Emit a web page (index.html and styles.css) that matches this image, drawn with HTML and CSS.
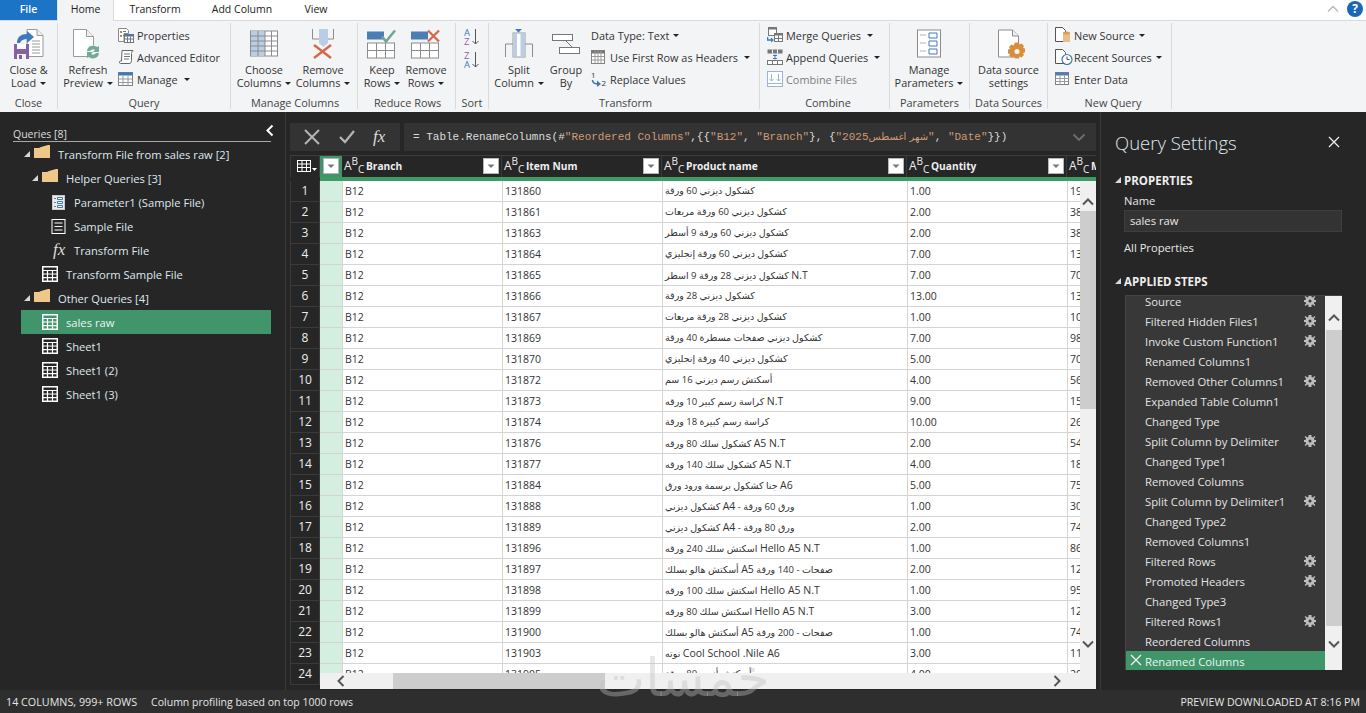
FILE: index.html
```html
<!DOCTYPE html>
<html lang="en">
<head>
<meta charset="utf-8">
<title>Power Query Editor</title>
<link rel="stylesheet" href="styles.css">
</head>
<body>
<svg class="defs" width="0" height="0">
  <defs>
    <symbol id="t-white" viewBox="0 0 16 16"><rect x=".75" y=".75" width="14.5" height="14.5" fill="none" stroke="#fff" stroke-width="1.5"/><path d="M0 4.500h16M0 8h16M0 11.700h16M5.500 4v12M10.500 4v12" stroke="#fff" stroke-width="1.200"/></symbol>
    <symbol id="folder" viewBox="0 0 16 14"><path d="M0 3h5l2-1 7-2h2v13H0z" fill="#eec78a"/></symbol>
    <symbol id="tri" viewBox="0 0 6 6"><path d="M6 0v6H0z" fill="#d8d8d8"/></symbol>
    <symbol id="gear" viewBox="0 0 12 12"><path d="M4.500 0h3v2l1.400.6L10.400 1l1 1-1.500 1.500.6 1.500H12v2h-1.500l-.6 1.500 1.500 1.500-1 1-1.500-1.500-1.400.6V12h-3v-2l-1.400-.6L1.600 11l-1-1 1.500-1.500L1.500 7H0V5h1.500l.6-1.500L.6 2l1-1 1.500 1.600L4.500 2z" fill="#bdbdbd"/><circle cx="6" cy="6" r="1.500" fill="#383838"/></symbol>
    <symbol id="down" viewBox="0 0 16 16"><rect width="16" height="16" fill="#fff"/><rect x=".5" y=".5" width="15" height="15" fill="none" stroke="#b5b5b5"/><path d="M4.500 6.500h7L8 10z" fill="#777"/></symbol>
  </defs>
</svg>

<header class="tabs">
  <div class="tab tab-file">File</div>
  <div class="tab tab-on">Home</div>
  <div class="tab tab-transform">Transform</div>
  <div class="tab tab-add">Add Column</div>
  <div class="tab tab-view">View</div>
  <div class="tabs-end">
    <svg width="12" height="8" viewBox="0 0 12 8"><path d="M1 6.500l5-5 5 5" fill="none" stroke="#b8b8b8" stroke-width="1.300"/></svg>
    <div class="help">?</div>
  </div>
</header>

<section class="ribbon">
  <div class="group g-close">
    <div class="gbody">
      <div class="big">
        <svg class="bigicon" width="30" height="32" viewBox="0 0 30 32"><path d="M13 1.500h10l6 6v21H13z" fill="#fff" stroke="#9a9a9a"/><path d="M23 1.500v6h6" fill="#eee" stroke="#9a9a9a"/><path d="M18 13h8M18 16h8M18 19h8M18 22h8M18 25h8" stroke="#9a9a9a"/><path d="M3 15c0-6 4-9 10-9V3l7 6-7 6v-4c-3 0-6 1-7 4z" fill="#3f79bd"/><path d="M0 16h15v15H0z" fill="#8661a8"/><path d="M3 16h9v5H3z" fill="#fff"/><path d="M3 26h9v5H3z" fill="#f3f4f6"/><path d="M5 27h3v4H5z" fill="#8661a8"/></svg>
        <span class="lbl">Close &amp;</span>
        <span class="lbl">Load <i class="caret"></i></span>
      </div>
    </div>
    <div class="gname">Close</div>
  </div>

  <div class="group g-query">
    <div class="gbody">
      <div class="big b-refresh">
        <svg class="bigicon" width="30" height="30" viewBox="0 0 30 30"><path d="M.5.500h13l7 7v20H.5z" fill="#fff" stroke="#9a9a9a"/><path d="M13.500.500v7h7" fill="#eee" stroke="#9a9a9a"/><circle cx="20" cy="23" r="7" fill="#f3f4f6"/><path d="M14 22a6 6 0 0 1 10-4l2-1v6h-6l2-2a3.500 3.500 0 0 0-5 1zM26 24a6 6 0 0 1-10 4l-2 1v-6h6l-2 2a3.500 3.500 0 0 0 5-1z" fill="#75a995"/></svg>
        <span class="lbl">Refresh</span>
        <span class="lbl">Preview <i class="caret"></i></span>
      </div>
      <div class="smalls">
        <div class="small"><svg width="16" height="16" viewBox="0 0 16 16"><path d="M.5 1.500h8l2 2v3H6v8H.5z" fill="#fff" stroke="#8a8a8a"/><path d="M2 4h2v2H2zM2 8h2v2H2z" fill="#b18a52"/><path d="M5 4.500h3M5 8.500h1" stroke="#777"/><rect x="6.500" y="7.500" width="9" height="8" fill="#fff" stroke="#777"/><path d="M6.500 7.500h9v2h-9z" fill="#3f79bd"/><path d="M6.500 12h9M9.500 9.500v6M12.500 9.500v6" stroke="#777"/></svg><span>Properties</span></div>
        <div class="small"><svg width="16" height="16" viewBox="0 0 16 16"><path d="M4 1.500h11c-1 1-1.500 2-1.500 3v7c0 2-1 3-2.500 3H2.500C1 14.500 1 12 2.500 12h1z" fill="#fff" stroke="#666"/><path d="M6 5h6M6 7.500h6M6 10h5" stroke="#777"/></svg><span>Advanced Editor</span></div>
        <div class="small"><svg width="16" height="14" viewBox="0 0 16 14"><rect x=".5" y=".5" width="14" height="13" fill="#fff" stroke="#808080"/><path d="M.5.500h14v3H.5z" fill="#3f79bd"/><path d="M.5 7h14M.5 10.500h14M5 3.500v10M10 3.500v10" stroke="#999"/></svg><span>Manage</span><i class="caret caret-wide"></i></div>
      </div>
    </div>
    <div class="gname">Query</div>
  </div>

  <div class="group g-cols">
    <div class="gbody">
      <div class="big b-cols">
        <svg class="bigicon" width="29" height="27" viewBox="0 0 29 27"><rect x=".5" y=".5" width="27" height="25" fill="#fff" stroke="#8c8c8c"/><rect x="1" y="1" width="14" height="24" fill="#b9cde4"/><path d="M.5 5.500h27M.5 10.500h27M.5 15.500h27M.5 20.500h27M8 .5v25M15 .5v25M21.500.500v25" stroke="#8c8c8c"/></svg>
        <span class="lbl">Choose</span>
        <span class="lbl">Columns <i class="caret"></i></span>
      </div>
      <div class="big b-cols2">
        <svg class="bigicon" width="24" height="30" viewBox="0 0 24 30"><path d="M1.500 0v10h21V0" fill="none" stroke="#8c8c8c"/><path d="M8 0h9v14l-4.500 4L8 14z" fill="#b9cde4"/><path d="M3 16l17 13M20 16L3 29" stroke="#d2694a" stroke-width="2.400"/></svg>
        <span class="lbl">Remove</span>
        <span class="lbl">Columns <i class="caret"></i></span>
      </div>
    </div>
    <div class="gname">Manage Columns</div>
  </div>

  <div class="group g-rows">
    <div class="gbody">
      <div class="big b-keep">
        <svg class="bigicon" width="30" height="29" viewBox="0 0 30 29"><path d="M0 2h17v8H0z" fill="#4a7eb5"/><path d="M15 7l4 5 9-11" fill="none" stroke="#6fa88f" stroke-width="2.600"/><rect x=".5" y="13.500" width="27" height="15" fill="#fff" stroke="#8c8c8c"/><path d="M.5 21h27M9.500 13.500v15M18.500 13.500v15" stroke="#8c8c8c"/></svg>
        <span class="lbl">Keep</span>
        <span class="lbl">Rows <i class="caret"></i></span>
      </div>
      <div class="big b-rem">
        <svg class="bigicon" width="30" height="29" viewBox="0 0 30 29"><path d="M0 2h17v8H0z" fill="#4a7eb5"/><path d="M17 1l11 11M28 1L17 12" stroke="#d2694a" stroke-width="2.200"/><rect x=".5" y="13.500" width="27" height="15" fill="#fff" stroke="#8c8c8c"/><path d="M.5 21h27M9.500 13.500v15M18.500 13.500v15" stroke="#8c8c8c"/></svg>
        <span class="lbl">Remove</span>
        <span class="lbl">Rows <i class="caret"></i></span>
      </div>
    </div>
    <div class="gname">Reduce Rows</div>
  </div>

  <div class="group g-sort">
    <div class="gbody sortbody">
      <svg width="16" height="18" viewBox="0 0 16 18"><text x="0" y="8" class="st st-a">A</text><text x="0" y="17" class="st st-z">Z</text><path d="M11.500 1v15M8.500 13l3 3 3-3" fill="none" stroke="#555"/></svg>
      <svg width="16" height="18" viewBox="0 0 16 18"><text x="0" y="8" class="st st-z">Z</text><text x="0" y="17" class="st st-a">A</text><path d="M11.500 1v15M8.500 13l3 3 3-3" fill="none" stroke="#555"/></svg>
    </div>
    <div class="gname">Sort</div>
  </div>

  <div class="group g-trans">
    <div class="gbody">
      <div class="big b-split">
        <svg class="bigicon" width="29" height="30" viewBox="0 0 29 30"><path d="M.5 28V15h27v13" fill="none" stroke="#8c8c8c"/><rect x="8" y="4" width="12" height="24" fill="#fff" stroke="#9a9a9a"/><path d="M8.500 4h3.500v24H8.500zM15.500 4H19.500v24h-4z" fill="#b9cde4"/><path d="M10 0h7l-3.500 3.500z" fill="#3f79bd"/></svg>
        <span class="lbl">Split</span>
        <span class="lbl">Column <i class="caret"></i></span>
      </div>
      <div class="big b-group">
        <svg class="bigicon" width="29" height="30" viewBox="0 0 29 30"><rect x=".5" y="5.500" width="20" height="6" fill="#fff" stroke="#777"/><rect x="7.500" y="18.500" width="20" height="6" fill="#fff" stroke="#777"/><path d="M14 12l6 6" stroke="#777"/></svg>
        <span class="lbl">Group</span>
        <span class="lbl">By</span>
      </div>
      <div class="smalls s-trans">
        <div class="small"><span>Data Type: Text</span><i class="caret"></i></div>
        <div class="small s-use"><svg width="14" height="14" viewBox="0 0 14 14"><rect x=".5" y=".5" width="13" height="13" fill="#fff" stroke="#808080"/><path d="M.5.500h13v3H.5z" fill="#777"/><path d="M.5 6.500h13M.5 10h13M4 .5v13M7 .5v13M10 .5v13" stroke="#999"/></svg><span>Use First Row as Headers</span><i class="caret caret-wide"></i></div>
        <div class="small"><svg width="16" height="16" viewBox="0 0 16 16"><text x="0" y="6.500" class="rt">1</text><text x="10.500" y="15" class="rt">2</text><path d="M1.500 9c0 3 2 4 6 4" fill="none" stroke="#3f79bd" stroke-width="1.600"/><path d="M6 9.500l4 3.500-4 3z" fill="#3f79bd"/></svg><span>Replace Values</span></div>
      </div>
    </div>
    <div class="gname">Transform</div>
  </div>

  <div class="group g-comb">
    <div class="gbody">
      <div class="smalls">
        <div class="small"><svg width="16" height="16" viewBox="0 0 16 16"><rect x="1.500" y=".5" width="8" height="8" fill="#fff" stroke="#777"/><path d="M1.500.500h8v2h-8z" fill="#777"/><rect x="7.500" y="6.500" width="8" height="8" fill="#fff" stroke="#777"/><path d="M7.500 6.500h8v2h-8z" fill="#777"/><path d="M7.500 11.500h8M11.500 8v7" stroke="#777"/><path d="M.5 10v3h4" fill="none" stroke="#3f79bd" stroke-width="1.500"/><path d="M4 10.500l3 2.500-3 2.500z" fill="#3f79bd"/></svg><span>Merge Queries</span><i class="caret caret-wide"></i></div>
        <div class="small"><svg width="16" height="16" viewBox="0 0 16 16"><rect x=".5" y=".5" width="15" height="4" fill="#777"/><path d="M5.500.500v4M10.500.500v4" stroke="#fff"/><rect x=".5" y="11.500" width="15" height="4" fill="#fff" stroke="#777"/><path d="M5.500 11.500v4M10.500 11.500v4" stroke="#777"/><path d="M8 5.500v5M6 6.500h4M6 9.500h4" stroke="#3f79bd"/></svg><span>Append Queries</span><i class="caret caret-wide"></i></div>
        <div class="small s-off"><svg width="16" height="16" viewBox="0 0 16 16"><rect x=".5" y=".5" width="15" height="15" fill="#fff" stroke="#9db5d5"/><path d="M4.500 3v7M2.500 8l2 2 2-2M11.500 3v7M9.500 8l2 2 2-2M1 12.500h14" fill="none" stroke="#9db5d5"/></svg><span>Combine Files</span></div>
      </div>
    </div>
    <div class="gname">Combine</div>
  </div>

  <div class="group g-par">
    <div class="gbody">
      <div class="big b-par">
        <svg class="bigicon" width="24" height="29" viewBox="0 0 24 29"><rect x=".5" y=".5" width="23" height="27" fill="#fff" stroke="#8c8c8c"/><path d="M3 5.500h6M3 13.500h6M3 21.500h6" stroke="#b5b5b5"/><path d="M12 3.500h8v5h-8zM12 11.500h8v5h-8zM12 19.500h8v5h-8z" fill="#fff" stroke="#3f79bd"/></svg>
        <span class="lbl">Manage</span>
        <span class="lbl">Parameters <i class="caret"></i></span>
      </div>
    </div>
    <div class="gname">Parameters</div>
  </div>

  <div class="group g-data">
    <div class="gbody">
      <div class="big b-par">
        <svg class="bigicon b-shift" width="28" height="29" viewBox="0 0 28 29"><path d="M.5.500h14l6 6v21H.5z" fill="#fff" stroke="#8c8c8c"/><path d="M14.500.500v6h6" fill="#eee" stroke="#8c8c8c"/><path d="M17 13h4l.5 2 2-1 2.500 2.500-1 2 2 .5v4l-2 .5 1 2-2.500 2.500-2-1-.5 2h-4l-.5-2-2 1L11 26.500l1-2-2-.5v-4l2-.5-1-2 2.500-2.500 2 1z" fill="#d88f3c"/><circle cx="19" cy="22" r="2.500" fill="#f3f4f6"/></svg>
        <span class="lbl">Data source</span>
        <span class="lbl">settings</span>
      </div>
    </div>
    <div class="gname">Data Sources</div>
  </div>

  <div class="group g-new">
    <div class="gbody">
      <div class="smalls">
        <div class="small"><svg width="16" height="16" viewBox="0 0 16 16"><path d="M.5.500h7l3 3v11H.5z" fill="#fff" stroke="#555"/><path d="M8 6h7v9H8z" fill="#e8bf86"/><ellipse cx="11.500" cy="6" rx="3.500" ry="1.500" fill="#d99f54"/></svg><span>New Source</span><i class="caret"></i></div>
        <div class="small"><svg width="18" height="16" viewBox="0 0 18 16"><path d="M.5.500h7l3 3v11H.5z" fill="#fff" stroke="#555"/><circle cx="12" cy="10.500" r="5" fill="#fff" stroke="#3f79bd" stroke-width="1.200"/><path d="M12 7.500v3h2.500" fill="none" stroke="#555"/></svg><span class="tight">Recent Sources</span><i class="caret"></i></div>
        <div class="small"><svg width="16" height="14" viewBox="0 0 16 14"><rect x=".5" y=".5" width="13" height="12" fill="#fff" stroke="#808080"/><path d="M.5.500h13v3H.5z" fill="#4a7eb5"/><path d="M.5 6.500h13M.5 9.500h13M5 3.500v9M9.500 3.500v9" stroke="#999"/></svg><span>Enter Data</span></div>
      </div>
    </div>
    <div class="gname">New Query</div>
  </div>
</section>

<main class="main">
  <aside class="left">
    <div class="qhead"><span>Queries [8]</span>
      <svg class="collapse" width="9" height="13" viewBox="0 0 9 13"><path d="M7.500 1.500l-5 5 5 5" fill="none" stroke="#fff" stroke-width="2"/></svg>
    </div>
    <ul class="tree">
      <li class="node l0"><svg class="tw" width="6" height="6"><use href="#tri"/></svg><svg class="fi" width="16" height="14"><use href="#folder"/></svg><span>Transform File from sales raw [2]</span></li>
      <li class="node l1"><svg class="tw" width="6" height="6"><use href="#tri"/></svg><svg class="fi" width="16" height="14"><use href="#folder"/></svg><span>Helper Queries [3]</span></li>
      <li class="node l2"><svg class="ni" width="13" height="15" viewBox="0 0 13 15"><rect x=".5" y=".5" width="12" height="14" fill="#e9edf3" stroke="#c9c9c9"/><path d="M2 3.500h2M2 7.500h2M2 11.500h2" stroke="#777"/><path d="M5.500 2.500h5v2h-5zM5.500 6.500h5v2h-5zM5.500 10.500h5v2h-5z" fill="#fff" stroke="#3f79bd"/></svg><span>Parameter1 (Sample File)</span></li>
      <li class="node l2"><svg class="ni" width="14" height="15" viewBox="0 0 14 15"><rect x=".5" y=".5" width="13" height="14" fill="none" stroke="#fff"/><path d="M3 4h8M3 7.500h8M3 11h8" stroke="#fff"/></svg><span>Sample File</span></li>
      <li class="node l2"><span class="fx fx-tree">fx</span><span>Transform File</span></li>
      <li class="node l1x"><svg class="ti" width="16" height="16"><use href="#t-white"/></svg><span>Transform Sample File</span></li>
      <li class="node l0"><svg class="tw" width="6" height="6"><use href="#tri"/></svg><svg class="fi" width="16" height="14"><use href="#folder"/></svg><span>Other Queries [4]</span></li>
      <li class="node l1x sel"><svg class="ti" width="16" height="16"><use href="#t-white"/></svg><span>sales raw</span></li>
      <li class="node l1x"><svg class="ti" width="16" height="16"><use href="#t-white"/></svg><span>Sheet1</span></li>
      <li class="node l1x"><svg class="ti" width="16" height="16"><use href="#t-white"/></svg><span>Sheet1 (2)</span></li>
      <li class="node l1x"><svg class="ti" width="16" height="16"><use href="#t-white"/></svg><span>Sheet1 (3)</span></li>
    </ul>
  </aside>

  <section class="center">
    <div class="fbar">
      <div class="fbtns">
        <svg width="16" height="16" viewBox="0 0 16 16"><path d="M1 1l14 14M15 1L1 15" stroke="#b5b5b5" stroke-width="2"/></svg>
        <svg width="16" height="14" viewBox="0 0 16 14"><path d="M1 7l5 5 9-11" fill="none" stroke="#b5b5b5" stroke-width="2.200"/></svg>
        <span class="fx">fx</span>
      </div>
      <div class="fbox">
        <code class="formula">= Table.RenameColumns(#<b>"Reordered Columns"</b>,{{<b>"B12"</b>, <b>"Branch"</b>}, {<b>"2025</b><b class="farab">شهر اغسطس</b><b>"</b>, <b>"Date"</b>}})</code>
        <svg class="fchev" width="14" height="9" viewBox="0 0 14 9"><path d="M1.500 1.500L7 7l5.500-5.500" fill="none" stroke="#6f6f6f" stroke-width="1.800"/></svg>
      </div>
    </div>

    <div class="grid">
      <div class="hrow">
        <div class="hcorner"><svg width="20" height="13" viewBox="0 0 20 13"><rect x=".5" y=".5" width="13" height="11" fill="#252525" stroke="#fff"/><path d="M.5 4h13M.5 7.500h13M5 .5v11M9.500.500v11" stroke="#fff"/><path d="M15 8h5l-2.500 3z" fill="#fff"/></svg></div>
        <div class="hsel"><svg width="16" height="16"><use href="#down"/></svg></div>
        <div class="hc"><span class="abc">A<sup>B</sup><sub>C</sub></span><span class="hname">Branch</span><svg class="hf" width="16" height="16"><use href="#down"/></svg></div>
        <div class="hc"><span class="abc">A<sup>B</sup><sub>C</sub></span><span class="hname">Item Num</span><svg class="hf" width="16" height="16"><use href="#down"/></svg></div>
        <div class="hc"><span class="abc">A<sup>B</sup><sub>C</sub></span><span class="hname">Product name</span><svg class="hf" width="16" height="16"><use href="#down"/></svg></div>
        <div class="hc"><span class="abc">A<sup>B</sup><sub>C</sub></span><span class="hname">Quantity</span><svg class="hf" width="16" height="16"><use href="#down"/></svg></div>
        <div class="hc"><span class="abc">A<sup>B</sup><sub>C</sub></span><span class="hname">Month</span></div>
      </div>
      <div class="gstrip"></div>
      <div class="rows">
        <div class="row"><div class="n">1</div><div class="s"></div><div class="c">B12</div><div class="c">131860</div><div class="c ar">كشكول ديزني 60 ورقة</div><div class="c">1.00</div><div class="c">19.50</div></div>
        <div class="row"><div class="n">2</div><div class="s"></div><div class="c">B12</div><div class="c">131861</div><div class="c ar">كشكول ديزني 60 ورقة مربعات</div><div class="c">2.00</div><div class="c">38.00</div></div>
        <div class="row"><div class="n">3</div><div class="s"></div><div class="c">B12</div><div class="c">131863</div><div class="c ar">كشكول ديزني 60 ورقة 9 أسطر</div><div class="c">2.00</div><div class="c">38.00</div></div>
        <div class="row"><div class="n">4</div><div class="s"></div><div class="c">B12</div><div class="c">131864</div><div class="c ar">كشكول ديزني 60 ورقة إنجليزي</div><div class="c">7.00</div><div class="c">13.00</div></div>
        <div class="row"><div class="n">5</div><div class="s"></div><div class="c">B12</div><div class="c">131865</div><div class="c ar"><span class="la">N.T</span> كشكول ديزني 28 ورقة 9 اسطر</div><div class="c">7.00</div><div class="c">70.00</div></div>
        <div class="row"><div class="n">6</div><div class="s"></div><div class="c">B12</div><div class="c">131866</div><div class="c ar">كشكول ديزني 28 ورقة</div><div class="c">13.00</div><div class="c">13.00</div></div>
        <div class="row"><div class="n">7</div><div class="s"></div><div class="c">B12</div><div class="c">131867</div><div class="c ar">كشكول ديزني 28 ورقة مربعات</div><div class="c">1.00</div><div class="c">10.00</div></div>
        <div class="row"><div class="n">8</div><div class="s"></div><div class="c">B12</div><div class="c">131869</div><div class="c ar">كشكول ديزني صفحات مسطرة 40 ورقة</div><div class="c">7.00</div><div class="c">98.00</div></div>
        <div class="row"><div class="n">9</div><div class="s"></div><div class="c">B12</div><div class="c">131870</div><div class="c ar">كشكول ديزني 40 ورقة إنجليزي</div><div class="c">5.00</div><div class="c">70.00</div></div>
        <div class="row"><div class="n">10</div><div class="s"></div><div class="c">B12</div><div class="c">131872</div><div class="c ar">أسكتش رسم ديزني 16 سم</div><div class="c">4.00</div><div class="c">56.00</div></div>
        <div class="row"><div class="n">11</div><div class="s"></div><div class="c">B12</div><div class="c">131873</div><div class="c ar"><span class="la">N.T</span> كراسة رسم كبير 10 ورقه</div><div class="c">9.00</div><div class="c">15.00</div></div>
        <div class="row"><div class="n">12</div><div class="s"></div><div class="c">B12</div><div class="c">131874</div><div class="c ar">كراسة رسم كبيرة 18 ورقة</div><div class="c">10.00</div><div class="c">26.00</div></div>
        <div class="row"><div class="n">13</div><div class="s"></div><div class="c">B12</div><div class="c">131876</div><div class="c ar"><span class="la">A5 N.T</span> كشكول سلك 80 ورقه</div><div class="c">2.00</div><div class="c">54.00</div></div>
        <div class="row"><div class="n">14</div><div class="s"></div><div class="c">B12</div><div class="c">131877</div><div class="c ar"><span class="la">A5 N.T</span> كشكول سلك 140 ورقه</div><div class="c">4.00</div><div class="c">18.00</div></div>
        <div class="row"><div class="n">15</div><div class="s"></div><div class="c">B12</div><div class="c">131884</div><div class="c ar"><span class="la">A6</span> جنا كشكول برسمة ورود ورق</div><div class="c">5.00</div><div class="c">75.00</div></div>
        <div class="row"><div class="n">16</div><div class="s"></div><div class="c">B12</div><div class="c">131888</div><div class="c ar">ورق 60 ورقة - <span class="la">A4</span> كشكول ديزني</div><div class="c">1.00</div><div class="c">30.00</div></div>
        <div class="row"><div class="n">17</div><div class="s"></div><div class="c">B12</div><div class="c">131889</div><div class="c ar">ورق 80 ورقة - <span class="la">A4</span> كشكول ديزني</div><div class="c">2.00</div><div class="c">74.00</div></div>
        <div class="row"><div class="n">18</div><div class="s"></div><div class="c">B12</div><div class="c">131896</div><div class="c ar"><span class="la">Hello A5 N.T</span> اسكتش سلك 240 ورقه</div><div class="c">1.00</div><div class="c">86.00</div></div>
        <div class="row"><div class="n">19</div><div class="s"></div><div class="c">B12</div><div class="c">131897</div><div class="c ar">صفحات - 140 ورقة <span class="la">A5</span> أسكتش هالو بسلك</div><div class="c">2.00</div><div class="c">12.00</div></div>
        <div class="row"><div class="n">20</div><div class="s"></div><div class="c">B12</div><div class="c">131898</div><div class="c ar"><span class="la">Hello A5 N.T</span> اسكتش سلك 100 ورقه</div><div class="c">1.00</div><div class="c">95.00</div></div>
        <div class="row"><div class="n">21</div><div class="s"></div><div class="c">B12</div><div class="c">131899</div><div class="c ar"><span class="la">Hello A5 N.T</span> اسكتش سلك 80 ورقه</div><div class="c">3.00</div><div class="c">12.00</div></div>
        <div class="row"><div class="n">22</div><div class="s"></div><div class="c">B12</div><div class="c">131900</div><div class="c ar">صفحات - 200 ورقة <span class="la">A5</span> أسكتش هالو بسلك</div><div class="c">1.00</div><div class="c">74.00</div></div>
        <div class="row"><div class="n">23</div><div class="s"></div><div class="c">B12</div><div class="c">131903</div><div class="c ar"><span class="la">Cool School .Nile A6</span> نوته</div><div class="c">3.00</div><div class="c">11.00</div></div>
        <div class="row"><div class="n">24</div><div class="s"></div><div class="c">B12</div><div class="c">131905</div><div class="c ar">أسكتش أنمي 80 ورقة</div><div class="c">4.00</div><div class="c">20.00</div></div>
      </div>
      <div class="vbar">
        <svg class="va" width="12" height="8" viewBox="0 0 12 8"><path d="M1 6.500l5-5 5 5" fill="none" stroke="#555" stroke-width="2"/></svg>
        <div class="vthumb"></div>
        <svg class="vb" width="12" height="8" viewBox="0 0 12 8"><path d="M1 1.500l5 5 5-5" fill="none" stroke="#555" stroke-width="2"/></svg>
      </div>
      <div class="hbar">
        <svg class="ha" width="8" height="12" viewBox="0 0 8 12"><path d="M6.500 1l-5 5 5 5" fill="none" stroke="#555" stroke-width="2"/></svg>
        <div class="hthumb"></div>
        <svg class="hb" width="8" height="12" viewBox="0 0 8 12"><path d="M1.500 1l5 5-5 5" fill="none" stroke="#555" stroke-width="2"/></svg>
      </div>
    </div>
  </section>

  <aside class="right">
    <div class="qs-head"><span class="qs-title">Query Settings</span>
      <svg width="12" height="12" viewBox="0 0 12 12"><path d="M1 1l10 10M11 1L1 11" stroke="#eee" stroke-width="1.300"/></svg>
    </div>
    <div class="sect"><svg width="6" height="6"><use href="#tri"/></svg><span>PROPERTIES</span></div>
    <div class="plabel">Name</div>
    <div class="pinput">sales raw</div>
    <div class="plabel pall">All Properties</div>
    <div class="sect sect2"><svg width="6" height="6"><use href="#tri"/></svg><span>APPLIED STEPS</span></div>
    <div class="steps">
      <ul class="slist">
        <li class="step"><span>Source</span><svg width="12" height="12"><use href="#gear"/></svg></li>
        <li class="step"><span>Filtered Hidden Files1</span><svg width="12" height="12"><use href="#gear"/></svg></li>
        <li class="step"><span>Invoke Custom Function1</span><svg width="12" height="12"><use href="#gear"/></svg></li>
        <li class="step"><span>Renamed Columns1</span></li>
        <li class="step"><span>Removed Other Columns1</span><svg width="12" height="12"><use href="#gear"/></svg></li>
        <li class="step"><span>Expanded Table Column1</span></li>
        <li class="step"><span>Changed Type</span></li>
        <li class="step"><span>Split Column by Delimiter</span><svg width="12" height="12"><use href="#gear"/></svg></li>
        <li class="step"><span>Changed Type1</span></li>
        <li class="step"><span>Removed Columns</span></li>
        <li class="step"><span>Split Column by Delimiter1</span><svg width="12" height="12"><use href="#gear"/></svg></li>
        <li class="step"><span>Changed Type2</span></li>
        <li class="step"><span>Removed Columns1</span></li>
        <li class="step"><span>Filtered Rows</span><svg width="12" height="12"><use href="#gear"/></svg></li>
        <li class="step"><span>Promoted Headers</span><svg width="12" height="12"><use href="#gear"/></svg></li>
        <li class="step"><span>Changed Type3</span></li>
        <li class="step"><span>Filtered Rows1</span><svg width="12" height="12"><use href="#gear"/></svg></li>
        <li class="step"><span>Reordered Columns</span></li>
        <li class="step step-on"><svg class="stepx" width="12" height="12" viewBox="0 0 12 12"><path d="M1 1l10 10M11 1L1 11" stroke="#eee" stroke-width="1.400"/></svg><span>Renamed Columns</span></li>
      </ul>
      <div class="sbar">
        <svg width="12" height="8" viewBox="0 0 12 8"><path d="M1 6.500l5-5 5 5" fill="none" stroke="#555" stroke-width="2"/></svg>
        <div class="sthumb"></div>
        <svg width="12" height="8" viewBox="0 0 12 8"><path d="M1 1.500l5 5 5-5" fill="none" stroke="#555" stroke-width="2"/></svg>
      </div>
    </div>
  </aside>
</main>

<footer class="status">
  <span class="st-cols">14 COLUMNS, 999+ ROWS</span>
  <span class="st-note">Column profiling based on top 1000 rows</span>
  <span class="st-end">PREVIEW DOWNLOADED AT 8:16 PM</span>
</footer>
<div class="wmark">خمسات</div>
</body>
</html>
```
FILE: styles.css
```css
* { box-sizing: border-box; }
html, body { margin: 0; padding: 0; }
body {
  width: 1366px; height: 713px; overflow: hidden; position: relative;
  display: flex; flex-direction: column;
  font-family: "Open Sans", "DejaVu Sans", sans-serif;
  font-size: 10.9px; color: #333; background: #fff;
}
.defs { position: absolute; }
ul { list-style: none; margin: 0; padding: 0; }
svg { display: block; flex: none; }

/* tabs */
.tabs { height: 21px; flex: none; display: flex; border-bottom: 1px solid #d9d9d9; font-size: 10.5px; color: #222; }
.tab { height: 20px; line-height: 18px; text-align: center; }
.tab-file { width: 57px; background: #1b74c5; color: #fff; font-weight: 600; }
.tab-on { width: 57px; height: 21px; background: #f3f4f6; border-left: 1px solid #e2e2e2; border-right: 1px solid #d9d9d9; }
.tab-transform { width: 82px; }
.tab-add { width: 92px; }
.tab-view { width: 56px; }
.tabs-end { margin-left: auto; display: flex; align-items: center; gap: 8px; padding-right: 3px; height: 17px; }
.help { width: 16px; height: 16px; border-radius: 50%; background: #1b67b8; color: #fff; font-weight: 700; font-size: 12px; line-height: 16px; text-align: center; }

/* ribbon */
.ribbon { height: 91px; flex: none; background: #f3f4f6; display: flex; padding-top: 2px; }
.group { display: flex; flex-direction: column; border-right: 1px solid #dadada; height: 86px; flex: none; }
.gbody { flex: 1; display: flex; min-height: 0; }
.gname { height: 12px; line-height: 12px; text-align: center; color: #444; white-space: nowrap; }
.big { display: flex; flex-direction: column; align-items: center; line-height: 13px; padding-top: 5px; color: #333; }
.bigicon { height: 32px; margin-bottom: 3px; }
.lbl { white-space: nowrap; }
.caret { display: inline-block; width: 0; height: 0; border: 3px solid transparent; border-top-color: #222; border-bottom: 0; vertical-align: 2px; margin-left: 1px; }
.caret-wide { margin-left: 3px; }
.smalls { display: flex; flex-direction: column; padding-top: 1px; }
.small { height: 22px; display: flex; align-items: center; gap: 3px; white-space: nowrap; }
.g-close { width: 58px; }
.g-close .big { width: 57px; }
.g-query { width: 173px; }
.b-refresh { width: 60px; }
.g-cols { width: 127px; padding-left: 2px; }
.b-cols { width: 62px; }
.b-cols2 { width: 56px; }
.g-rows { width: 98px; padding-left: 2px; }
.b-keep { width: 44px; }
.b-rem { width: 44px; }
.g-sort { width: 33px; }
.sortbody { flex-direction: column; gap: 5px; padding: 5px 0 0 8px; }
.sortbody svg, .s-trans svg { overflow: visible; }
.st { font-size: 9.5px; font-family: "Open Sans", sans-serif; }
.st-a { fill: #3f79bd; }
.st-z { fill: #8661a8; }
.rt { font-size: 8px; font-family: "Open Sans", sans-serif; fill: #333; }
.g-trans { width: 271px; padding-left: 3px; }
.b-split { width: 54px; }
.b-group { width: 40px; }
.s-trans { padding-left: 5px; }
.s-use svg { margin-right: 2px; }
.g-comb { width: 130px; padding-left: 7px; }
.s-off { color: #7d7d7d; }
.g-par { width: 80px; }
.b-par { width: 78px; }
.b-shift { margin-left: 6px; }
.g-data { width: 78px; }
.g-new { width: 124px; padding-left: 7px; }
.tight { margin-left: -2px; }

/* main */
.main { flex: 1; min-height: 0; background: #262626; display: flex; color: #e8e8e8; font-size: 11.2px; }
.left { width: 286px; flex: none; border-right: 1px solid #3a3a3a; padding: 12px 14px 0 13px; }
.qhead { height: 18px; border-bottom: 1px solid #a8a8a8; display: flex; justify-content: space-between; color: #ddd; font-size: 10.5px; line-height: 20px; }
.collapse { margin: 0 -3px 0 0; }
.tree { padding-left: 8px; }
.node { height: 24px; display: flex; align-items: center; white-space: nowrap; color: #dfe8ee; }
.l0 { padding-left: 3px; }
.l1 { padding-left: 11px; }
.l2 { padding-left: 30px; }
.l1x { padding-left: 21px; }
.tw { margin-right: 4px; }
.fi { margin: 0 8px 4px 0; }
.ni { margin-right: 8px; width: 15px; }
.ti { margin-right: 8px; }
.sel { background: #40966a; color: #f2f2f2; }
.fx { font-family: "Liberation Serif", serif; font-style: italic; color: #ddd; font-size: 17px; width: 20px; }
.fx-tree { width: 23px; padding-left: 2px; }

/* center */
.center { width: 814px; flex: none; padding: 11px 0 0 4px; }
.fbar { display: flex; height: 28px; gap: 4px; width: 806px; }
.fbtns { width: 110px; background: #333; display: flex; align-items: center; justify-content: space-between; padding: 0 13px 0 14px; }
.fbtns .fx { width: 14px; }
.fbox { flex: 1; background: #333; display: flex; align-items: center; justify-content: space-between; padding: 0 10px 0 9px; }
.formula { font-family: "Liberation Mono", monospace; font-size: 11px; color: #dcdcdc; white-space: nowrap; }
.formula b { font-weight: 400; color: #cf9a76; }
.farab { font-family: "DejaVu Sans", sans-serif; font-size: 10px; letter-spacing: 1.7px; }
.grid { margin-top: 4px; width: 806px; height: 535px; overflow: hidden; position: relative; border-top: 1px solid #3c3c3c; }
.hrow, .row { display: grid; grid-template-columns: 30px 22px 160px 160px 245px 160px 160px; width: 937px; }
.hrow { height: 21px; background: #262626; color: #eee; }
.hcorner { display: flex; align-items: center; padding-left: 6px; border: 1px solid #3a3a3a; border-width: 0 1px 0 1px; }
.hsel { background: #40966a; padding: 2px 3px; }
.hc { display: flex; align-items: center; padding: 0 0 2px 2px; border-right: 1px solid #3a3a3a; position: relative; }
.abc { font-size: 12px; width: 20px; flex: none; line-height: 1; white-space: nowrap; }
.abc sup, .abc sub { font-size: 10px; line-height: 0; }
.hname { font-weight: 700; font-size: 10.2px; margin-left: 2px; }
.hf { margin-left: auto; margin-right: 2px; }
.gstrip { height: 4px; background: #3f9a66; margin-left: 30px; }
.row { height: 21px; }
.n { background: #262626; color: #eee; text-align: center; font-size: 12px; line-height: 20px; border: 1px solid #3a3a3a; border-width: 0 1px 1px 1px; }
.s { background: #d4efe0; border-bottom: 1px solid #d4d4d4; }
.c { background: #fff; color: #333; line-height: 20px; padding-left: 2px; border-bottom: 1px solid #d4d4d4; border-left: 1px solid #d4d4d4; white-space: nowrap; overflow: hidden; font-size: 10.5px; }
.ar { direction: rtl; text-align: left; font-size: 9.5px; }
.la { font-size: 10.5px; }
.vbar { position: absolute; right: 0; top: 25px; width: 16px; height: 492px; background: #f0f0f0; display: flex; flex-direction: column; align-items: center; padding-top: 17px; }
.vthumb { width: 16px; height: 198px; background: #cdcdcd; margin-top: 5px; }
.va { flex: none; }
.vb { margin-top: 231px; }
.hbar { position: absolute; left: 30px; right: 0; top: 517px; height: 16px; background: #f0f0f0; display: flex; align-items: center; padding-left: 17px; }
.hthumb { width: 212px; height: 16px; background: #cdcdcd; margin-left: 48px; }
.hb { margin-left: 448px; }

/* right */
.right { width: 266px; flex: none; border-left: 1px solid #3a3a3a; padding: 16px 0 0 14px; }
.qs-head { display: flex; justify-content: space-between; align-items: center; height: 28px; padding-right: 26px; }
.qs-title { font-size: 18.5px; font-weight: 300; color: #dfe8ee; }
.sect { display: flex; align-items: center; gap: 4px; font-weight: 700; font-size: 11.5px; height: 16px; margin-top: 16px; color: #eee; }
.sect span { margin-left: -1px; }
.plabel { margin: 5px 0 0 9px; height: 16px; line-height: 16px; color: #e8e8e8; }
.pinput { margin: 1px 0 0 9px; width: 218px; height: 22px; background: #333; border: 1px solid #3e3e3e; line-height: 20px; padding-left: 5px; }
.pall { margin-top: 8px; }
.sect2 { margin-top: 17px; }
.steps { margin: 6px 0 0 10px; width: 217px; height: 375px; overflow: hidden; display: flex; background: #383838; border: 1px solid #444; border-width: 1px 0 0 1px; }
.slist { flex: 1; margin-top: -5px; }
.step { height: 20px; display: flex; align-items: center; justify-content: space-between; padding: 0 9px 0 19px; position: relative; color: #e4e4e4; font-size: 11.3px; }
.step-on { background: #40966a; justify-content: flex-start; color: #eaf4ef; }
.stepx { position: absolute; left: 4px; top: 3px; }
.sbar { width: 17px; flex: none; background: #f0f0f0; display: flex; flex-direction: column; align-items: center; padding-top: 18px; }
.sthumb { width: 16px; height: 296px; background: #cdcdcd; margin: 8px 0 14px; }

/* status */
.status { height: 23px; flex: none; background: #2e2e2e; color: #e6e6e6; display: flex; align-items: center; padding: 0 6px; font-size: 10.6px; }
.st-cols { font-size: 10.75px; }
.st-note { margin-left: 14px; font-size: 10.5px; }
.st-end { margin-left: auto; }

/* watermark */
.wmark { position: absolute; left: 590px; top: 646px; width: 186px; font-size: 52px; line-height: 64px; font-family: "DejaVu Sans", sans-serif; color: rgba(190,190,190,.4); text-align: center; white-space: nowrap; }
```
